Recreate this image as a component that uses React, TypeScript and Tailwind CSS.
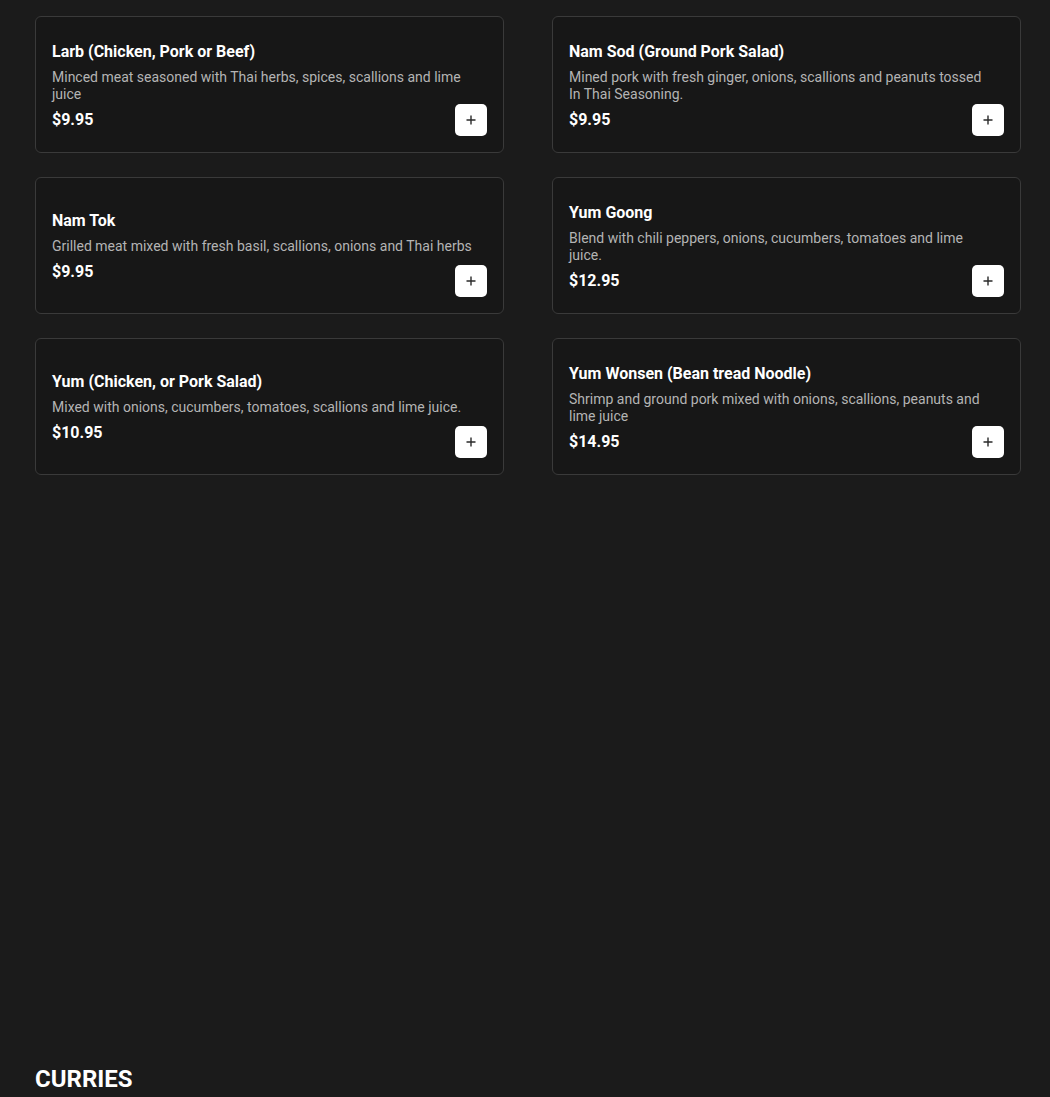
import * as React from "react";

type Dish = {
  name: string;
  description: string;
  price: string;
};

const SALADS: Dish[] = [
  {
    name: "Larb (Chicken, Pork or Beef)",
    description: "Minced meat seasoned with Thai herbs, spices, scallions and lime juice",
    price: "$9.95",
  },
  {
    name: "Nam Sod (Ground Pork Salad)",
    description: "Mined pork with fresh ginger, onions, scallions and peanuts tossed In Thai Seasoning.",
    price: "$9.95",
  },
  {
    name: "Nam Tok",
    description: "Grilled meat mixed with fresh basil, scallions, onions and Thai herbs",
    price: "$9.95",
  },
  {
    name: "Yum Goong",
    description: "Blend with chili peppers, onions, cucumbers, tomatoes and lime juice.",
    price: "$12.95",
  },
  {
    name: "Yum (Chicken, or Pork Salad)",
    description: "Mixed with onions, cucumbers, tomatoes, scallions and lime juice.",
    price: "$10.95",
  },
  {
    name: "Yum Wonsen (Bean tread Noodle)",
    description: "Shrimp and ground pork mixed with onions, scallions, peanuts and lime juice",
    price: "$14.95",
  },
];

function PlusIcon() {
  return (
    <svg width="10" height="10" viewBox="0 0 10 10" aria-hidden="true">
      <path d="M5 0.5v9M0.5 5h9" stroke="#2a2a2a" strokeWidth="1.4" fill="none" />
    </svg>
  );
}

function DishCard({ dish }: { dish: Dish }) {
  return (
    <div className="relative flex h-[137px] items-center rounded-md border border-[#3a3a3a] bg-[#171717] p-4">
      <div className="w-[423px] pt-[3px]">
        <h3 className="text-base font-bold leading-5 text-white">{dish.name}</h3>
        <p className="mt-[7px] text-sm leading-[17px] text-[#b4b4b4]">{dish.description}</p>
        <div className="mt-[6px] text-base font-bold leading-[22px] text-white">{dish.price}</div>
      </div>
      {/* add-to-order button sits in the bottom-right corner */}
      <button
        type="button"
        aria-label={`Add ${dish.name}`}
        className="absolute bottom-4 right-4 flex h-8 w-8 items-center justify-center rounded-[5px] bg-white"
      >
        <PlusIcon />
      </button>
    </div>
  );
}

export default function App() {
  return (
    <div
      className="min-h-[1097px] bg-[#1b1b1b] pt-4"
      style={{ fontFamily: "Roboto, 'Liberation Sans', sans-serif" }}
    >
      <div className="ml-[35px] w-[986px]">
        <div className="grid grid-cols-2 gap-x-12 gap-y-6">
          {SALADS.map((dish) => (
            <DishCard key={dish.name} dish={dish} />
          ))}
        </div>

        <section className="mt-[588px]">
          <h2 className="text-2xl font-bold leading-8 text-white">CURRIES</h2>
          <p className="mt-1 text-sm text-[#8a8a8a]">Served with steamed jasmine rice</p>
        </section>
      </div>
    </div>
  );
}
